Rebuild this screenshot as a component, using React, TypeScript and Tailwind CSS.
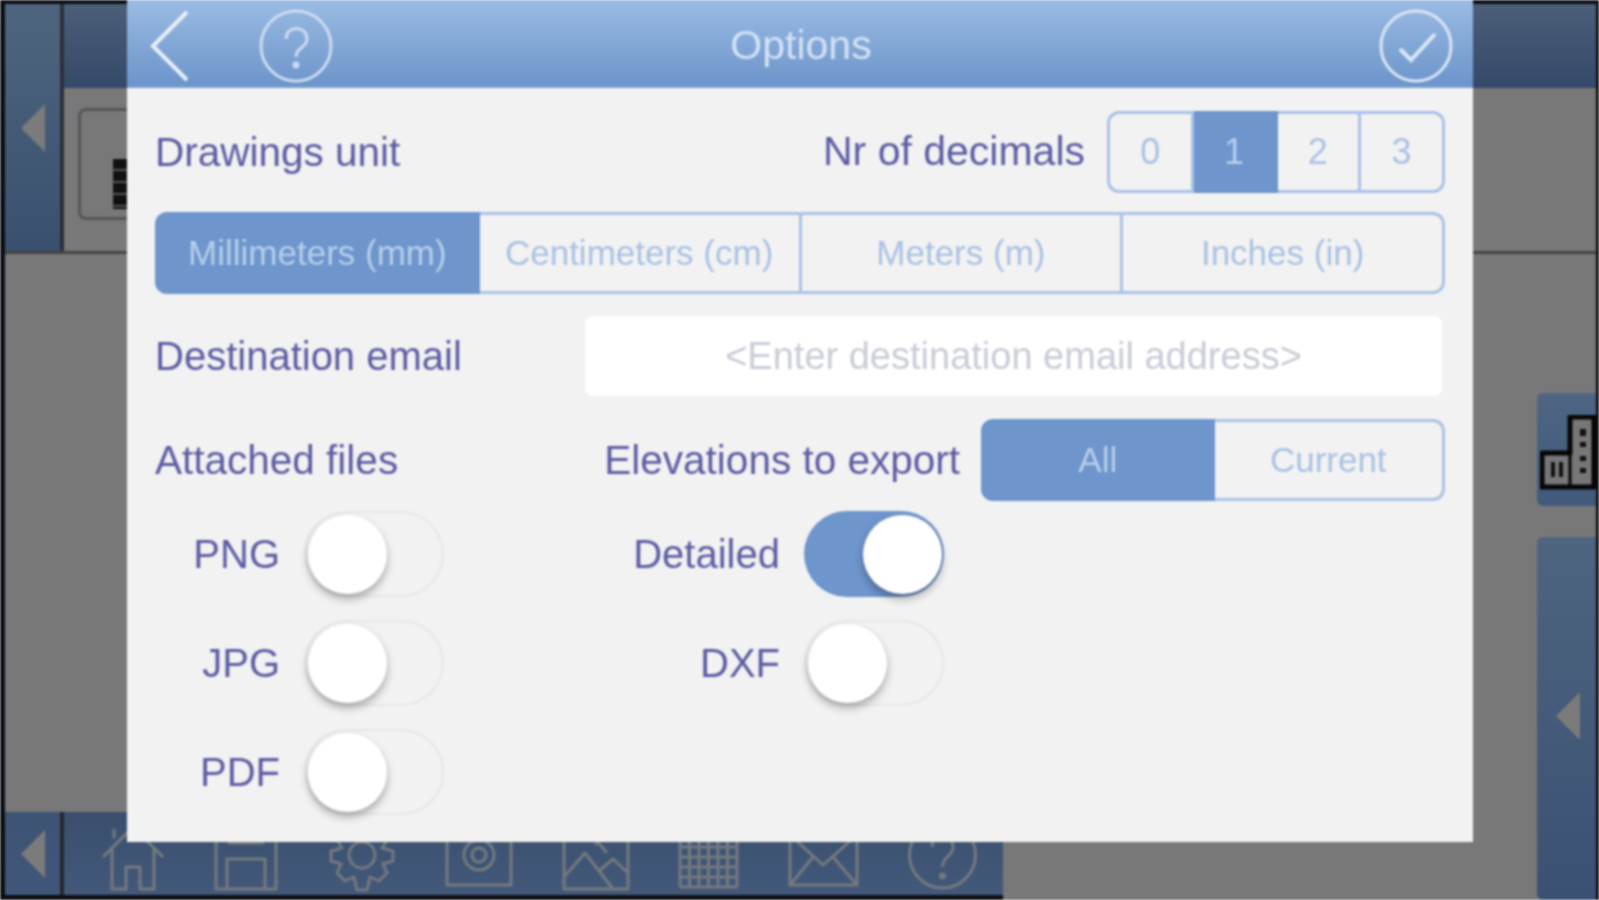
import React from "react";

const font = { fontFamily: '"Liberation Sans", Arial, sans-serif' };

function Triangle() {
  return (
    <svg width="26" height="48" viewBox="0 0 26 48" aria-hidden="true">
      <path d="M25 0 L1 24 L25 48 Z" fill="#7b7b7b" />
    </svg>
  );
}

function ToolbarIcon({ w, children }: { w: number; children: React.ReactNode }) {
  return (
    <svg width={w} height="70" viewBox={`0 0 ${w} 70`} fill="none" stroke="#74797f" strokeWidth="3" strokeLinejoin="round" aria-hidden="true">
      {children}
    </svg>
  );
}

function Toolbar() {
  const gridLines = [];
  for (let i = 0; i <= 6; i++) gridLines.push(<path key={"v" + i} d={`M${2 + i * 9.5} 4V64`} />);
  for (let i = 0; i <= 6; i++) gridLines.push(<path key={"h" + i} d={`M2 ${4 + i * 10}H59`} />);
  return (
    <div className="flex flex-1 items-end bg-gradient-to-b from-[#3a4f6d] to-[#43597a] pb-[2px] pl-[36px]">
      <div className="flex w-[878px] items-end justify-between">
        <ToolbarIcon w={66}>
          <path d="M3 34 L33 4 L63 34 M12 26V66H26V44H40V66H54V26 M14 15V6" />
        </ToolbarIcon>
        <ToolbarIcon w={66}>
          <path d="M3 6H63V66H3Z M14 36H52V66H14Z M16 6V20H50V6" />
        </ToolbarIcon>
        <ToolbarIcon w={70}>
          <circle cx="35" cy="32" r="13" />
          <path d="M29 4H41L43 13L52 9L60 17L55 25L66 28V38L56 41L60 50L52 58L43 54L40 67H30L27 54L18 58L10 50L14 41L4 38V28L15 25L10 17L18 9L27 13Z" />
        </ToolbarIcon>
        <ToolbarIcon w={70}>
          <path d="M3 8H67V62H3Z" />
          <circle cx="35" cy="32" r="15" />
          <circle cx="35" cy="32" r="7" />
        </ToolbarIcon>
        <ToolbarIcon w={70}>
          <path d="M3 4H67V66H3Z M3 54L24 30L52 66 M38 48L52 36L67 50 M24 4L46 30 M50 4L34 22" />
        </ToolbarIcon>
        <ToolbarIcon w={61}>{gridLines}</ToolbarIcon>
        <ToolbarIcon w={73}>
          <path d="M3 10H70V62H3Z M3 12L36 42L70 12 M3 62L26 34 M70 62L46 34" />
        </ToolbarIcon>
        <ToolbarIcon w={71}>
          <circle cx="35.5" cy="32" r="33" />
          <path d="M25 24C25 10 46 10 46 24C46 34 35.5 33 35.5 44" />
          <circle cx="35.5" cy="53" r="2" fill="#74797f" />
        </ToolbarIcon>
      </div>
    </div>
  );
}

function Background() {
  return (
    <div className="flex h-full flex-col">
      <div className="flex h-[254px] shrink-0 border-t-[4px] border-b-[3px] border-t-[#0c0f14] border-b-[#454545] bg-[#787878]">
        <div className="flex w-[55px] shrink-0 items-center justify-center bg-gradient-to-b from-[#4f657f] to-[#39516f]">
          <Triangle />
        </div>
        <div className="w-[4px] shrink-0 bg-[#2b2f36]" />
        <div className="flex flex-1 flex-col">
          <div className="h-[84px] bg-gradient-to-b from-[#4b5f79] to-[#35496a]" />
          <div className="pl-[14px] pt-[20px]">
            <div className="flex h-[112px] w-[120px] items-end rounded-[8px] border-[3px] border-[#555] pb-[8px] pl-[32px]">
              <div className="h-[50px] w-[14px] bg-[repeating-linear-gradient(180deg,#111_0,#111_10px,#555_10px,#555_12px)]" />
            </div>
          </div>
        </div>
      </div>
      <div className="flex flex-1">
        <div className="flex flex-1 flex-col justify-end">
          <div className="flex h-[88px] w-[998px] items-stretch border-b-[5px] border-[#0c0f14]">
            <div className="flex w-[55px] shrink-0 items-center justify-center bg-gradient-to-b from-[#3d5474] to-[#41577a]">
              <Triangle />
            </div>
            <div className="w-[4px] shrink-0 bg-[#23272e]" />
            <Toolbar />
          </div>
        </div>
        <div className="flex w-[59px] shrink-0 flex-col pt-[139px]">
          <div className="flex h-[113px] items-center justify-end rounded-l-[6px] bg-gradient-to-b from-[#4e6683] to-[#415a7c] pt-[6px]">
            <svg width="56" height="76" viewBox="0 0 56 76" aria-hidden="true">
              <path d="M30 2H54V72H2V38H30Z" fill="#777" stroke="#050505" strokeWidth="5" strokeLinejoin="round" />
              <path d="M30 38V72" stroke="#050505" strokeWidth="3" />
              <path d="M40 14h6v7h-6z M40 27h6v5h-6z M40 41h6v5h-6z M40 53h6v5h-6z M11 47h4v15h-4z M19 47h4v15h-4z" fill="#111" />
            </svg>
          </div>
          <div className="mt-[31px] flex flex-1 items-start justify-center rounded-l-[6px] bg-gradient-to-b from-[#4e6580] to-[#3b5173] pl-[2px] pt-[155px]">
            <Triangle />
          </div>
        </div>
      </div>
    </div>
  );
}

function Seg({ items, active, className, text }: { items: string[]; active: number; className: string; text: string }) {
  return (
    <div className={`flex ${className}`}>
      {items.map((t, i) => (
        <div
          key={t}
          className={`flex flex-1 items-center justify-center border-y-[3px] border-r-[3px] ${text} ${
            i === 0 ? "rounded-l-[12px] border-l-[3px]" : ""
          } ${i === items.length - 1 ? "rounded-r-[12px]" : ""} ${
            i === active ? "border-[#6e95cc] bg-[#6e95cc] text-[#b7cfec]" : "border-[#a9c2e6] text-[#a9c1e3]"
          }`}
        >
          {t}
        </div>
      ))}
    </div>
  );
}

function Toggle({ label, on, labelW }: { label: string; on?: boolean; labelW: string }) {
  return (
    <div className="flex items-center gap-[24px]">
      <div className={`text-right text-[40px] text-[#5b5ba3] ${labelW}`}>{label}</div>
      <div
        className={`flex h-[86px] w-[140px] items-center rounded-full px-[2px] ${
          on ? "justify-end bg-[#6e95cc]" : "justify-start border-2 border-[#e7e7e7]"
        }`}
      >
        <div className="h-[79px] w-[79px] rounded-full bg-white shadow-[0_5px_8px_rgba(0,0,0,0.3)]" />
      </div>
    </div>
  );
}

function Modal() {
  return (
    <div className="absolute left-[127px] top-0 h-[842px] w-[1346px] bg-[#f2f2f2] text-[#5b5ba3]">
      <header className="grid h-[88px] grid-cols-[1fr_auto_1fr] items-center border-b-[2px] border-[#7da0d2] bg-gradient-to-b from-[#9abbe3] to-[#6d95cb] pl-[22px] pr-[20px] pt-[5px]">
        <div className="flex items-center gap-[68px]">
          <svg width="42" height="74" viewBox="0 0 42 74" fill="none" stroke="#e8eff9" strokeWidth="4" aria-hidden="true">
            <path d="M38 3L4 37L38 71" />
          </svg>
          <svg width="74" height="74" viewBox="0 0 74 74" fill="none" stroke="#cddcf1" strokeWidth="3" aria-hidden="true">
            <circle cx="37" cy="37" r="35" />
            <path d="M27 30C27 16 48 16 48 30C48 39 37 38 37 48" />
            <circle cx="37" cy="56" r="2" fill="#cddcf1" />
          </svg>
        </div>
        <div className="text-[41px] text-[#d3e2f5]">Options</div>
        <div className="flex justify-end">
          <svg width="74" height="74" viewBox="0 0 74 74" fill="none" stroke="#dbe6f5" strokeWidth="3" aria-hidden="true">
            <circle cx="37" cy="37" r="35" />
            <path d="M21 40L32 51L56 25" strokeWidth="4" />
          </svg>
        </div>
      </header>
      <div className="flex flex-col px-[28px] pt-[23px]">
        <div className="flex h-[82px] items-center justify-between">
          <div className="text-[40.5px]">Drawings unit</div>
          <div className="flex items-center gap-[22px]">
            <div className="text-[41px]">Nr of decimals</div>
            <Seg items={["0", "1", "2", "3"]} active={1} className="h-[82px] w-[338px]" text="text-[36px]" />
          </div>
        </div>
        <Seg
          items={["Millimeters (mm)", "Centimeters (cm)", "Meters (m)", "Inches (in)"]}
          active={0}
          className="mt-[19px] h-[82px]"
          text="text-[35px]"
        />
        <div className="mt-[22px] flex h-[80px] items-center justify-between">
          <div className="text-[40px]">Destination email</div>
          <div className="mr-[3px] flex h-[80px] w-[857px] items-center justify-center rounded-[8px] bg-white text-[38px] text-[#c9ccd6]">
            {"<Enter destination email address>"}
          </div>
        </div>
        <div className="mt-[23px] flex h-[82px] items-center justify-between">
          <div className="text-[40.5px]">Attached files</div>
          <div className="flex items-center gap-[21px]">
            <div className="text-[40.5px]">Elevations to export</div>
            <Seg items={["All", "Current"]} active={0} className="h-[82px] w-[464px]" text="text-[35px]" />
          </div>
        </div>
        <div className="mt-[10px] flex gap-[136px]">
          <div className="flex flex-col gap-[23px]">
            <Toggle label="PNG" labelW="w-[125px]" />
            <Toggle label="JPG" labelW="w-[125px]" />
            <Toggle label="PDF" labelW="w-[125px]" />
          </div>
          <div className="flex flex-col gap-[23px]">
            <Toggle label="Detailed" on labelW="w-[200px]" />
            <Toggle label="DXF" labelW="w-[200px]" />
          </div>
        </div>
      </div>
    </div>
  );
}

export default function App() {
  return (
    <div className="relative h-[900px] w-[1599px] overflow-hidden bg-[#0c0f14] pl-[5px] pr-[3px] blur-[1px]" style={font}>
      <div className="h-full bg-[#787878]">
        <Background />
      </div>
      <Modal />
    </div>
  );
}
